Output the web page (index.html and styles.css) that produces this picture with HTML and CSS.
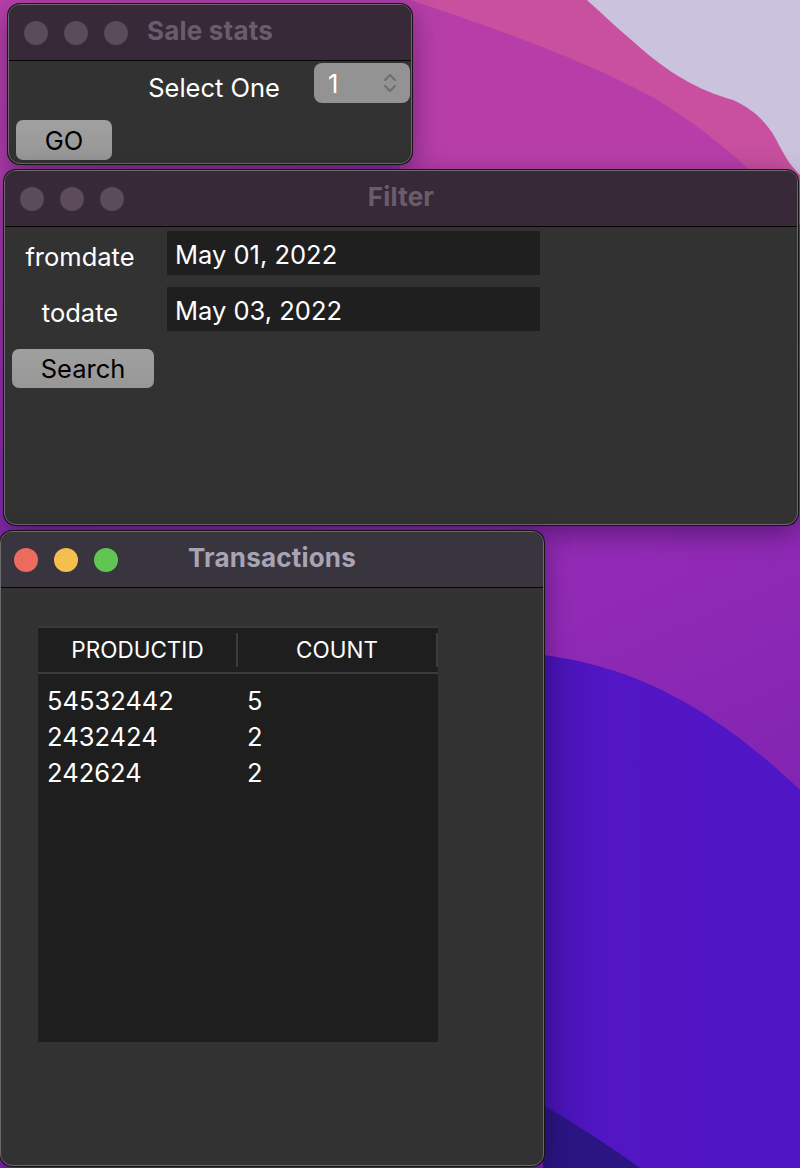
FILE: index.html
```html
<!DOCTYPE html>
<html lang="en">
<head>
<meta charset="utf-8">
<title>Sale stats</title>
<link rel="stylesheet" href="styles.css">
</head>
<body>
<div class="desktop">
  <svg class="wallpaper" viewBox="0 0 800 1168" preserveAspectRatio="none" aria-hidden="true">
    <defs>
      <linearGradient id="base" x1="0" y1="0" x2="0.3" y2="1">
        <stop offset="0" stop-color="#b841aa"/>
        <stop offset="0.15" stop-color="#b03eae"/>
        <stop offset="0.4" stop-color="#8c2bb2"/>
        <stop offset="0.55" stop-color="#9a2db8"/>
        <stop offset="1" stop-color="#7a22b0"/>
      </linearGradient>
      <linearGradient id="violet" x1="0" y1="0" x2="1" y2="0">
        <stop offset="0" stop-color="#4613b4"/>
        <stop offset="0.25" stop-color="#5216c4"/>
        <stop offset="1" stop-color="#5015c6"/>
      </linearGradient>
    </defs>
    <rect x="0" y="0" width="800" height="1168" fill="url(#base)"/>
    <rect x="400" y="0" width="400" height="180" fill="#b73ea9"/>
    <path d="M410 0 C470 20 560 50 633 87 C680 110 730 150 760 180 L800 225 L800 0 Z" fill="#c8509f"/>
    <path d="M587 0 C600 12 625 35 650 56 C680 80 705 92 733 100 C755 110 770 125 780 147 C786 158 790 165 800 175 L800 0 Z" fill="#cbc3de"/>
    <path d="M543 655 C620 665 700 695 800 790 L800 1168 L543 1168 Z" fill="url(#violet)"/>
    <path d="M543 1105 Q590 1132 640 1168 L543 1168 Z" fill="#2a1582"/>
  </svg>

  <section class="window win-sale">
    <header class="titlebar titlebar-inactive">
      <div class="lights">
        <span class="light"></span><span class="light"></span><span class="light"></span>
      </div>
      <h1 class="title">Sale stats</h1>
      <div></div>
    </header>
    <div class="sale-body">
      <div class="select-row">
        <span class="label select-label">Select One</span>
        <div class="popup">
          <span class="popup-value">1</span>
          <svg class="chevrons" width="14" height="22" viewBox="0 0 14 22" aria-hidden="true">
            <path d="M2 8 L7 3 L12 8" fill="none" stroke="#6e6e6e" stroke-width="2" stroke-linecap="round" stroke-linejoin="round"/>
            <path d="M2 14 L7 19 L12 14" fill="none" stroke="#6e6e6e" stroke-width="2" stroke-linecap="round" stroke-linejoin="round"/>
          </svg>
        </div>
      </div>
      <button class="btn btn-go">GO</button>
    </div>
  </section>

  <section class="window win-filter">
    <header class="titlebar titlebar-inactive">
      <div class="lights">
        <span class="light"></span><span class="light"></span><span class="light"></span>
      </div>
      <h1 class="title">Filter</h1>
      <div></div>
    </header>
    <div class="filter-body">
      <span class="label field-label">fromdate</span>
      <div class="field">May 01, 2022</div>
      <span class="label field-label">todate</span>
      <div class="field">May 03, 2022</div>
      <button class="btn btn-search">Search</button>
    </div>
  </section>

  <section class="window win-trans">
    <header class="titlebar titlebar-active">
      <div class="lights">
        <span class="light light-close"></span><span class="light light-min"></span><span class="light light-max"></span>
      </div>
      <h1 class="title">Transactions</h1>
      <div></div>
    </header>
    <div class="trans-body">
      <div class="table">
        <div class="thead">
          <div class="th">PRODUCTID</div>
          <div class="th">COUNT</div>
        </div>
        <div class="tbody">
          <div class="tr"><span class="td">54532442</span><span class="td td-count">5</span></div>
          <div class="tr"><span class="td">2432424</span><span class="td td-count">2</span></div>
          <div class="tr"><span class="td">242624</span><span class="td td-count">2</span></div>
        </div>
      </div>
    </div>
  </section>
</div>
</body>
</html>
```

FILE: styles.css
```css
* { box-sizing: border-box; }

html, body {
  margin: 0;
  padding: 0;
  width: 800px;
  height: 1168px;
  overflow: hidden;
  background: #8a2ab2;
  font-family: Inter, "Noto Sans", "Liberation Sans", sans-serif;
}

.desktop {
  position: relative;
  width: 800px;
  height: 1168px;
  overflow: hidden;
}

.wallpaper {
  position: absolute;
  left: 0;
  top: 0;
  width: 800px;
  height: 1168px;
}

.window {
  position: absolute;
  display: flex;
  flex-direction: column;
  background: #323232;
  border: 1px solid #6a6a6a;
  border-radius: 12px;
  box-shadow: 0 0 0 1px #141414, 0 8px 28px rgba(20, 0, 40, 0.45);
  overflow: hidden;
}

.win-sale { left: 8px; top: 4px; width: 404px; height: 160px; }
.win-filter { left: 4px; top: 170px; width: 794px; height: 355px; }
.win-trans { left: 0; top: 531px; width: 544px; height: 635px; }

.titlebar {
  flex: none;
  height: 56px;
  display: grid;
  grid-template-columns: 1fr auto 1fr;
  align-items: center;
  border-bottom: 1px solid #050505;
}

.titlebar-inactive { background: #372937; }
.titlebar-active { background: #38353f; }

.lights {
  display: flex;
  gap: 16px;
  padding-left: 15px;
}

.win-trans .lights { padding-left: 13px; }

.light {
  width: 24px;
  height: 24px;
  border-radius: 50%;
  background: #5b4b5b;
}

.light-close { background: #ec6a5e; }
.light-min { background: #f4bf4f; }
.light-max { background: #61c554; }

.title {
  margin: 0 0 4px;
  font-size: 26px;
  font-weight: 700;
  letter-spacing: 0.2px;
  color: #6b5c6b;
  white-space: nowrap;
}

.titlebar-active .title { color: #a9a4b4; }

.label {
  color: #ffffff;
  font-size: 25.5px;
}

/* Sale stats */
.sale-body {
  flex: 1;
  display: flex;
  flex-direction: column;
  align-items: flex-start;
  gap: 17px;
  padding: 2px 1px 0 7px;
}

.select-row {
  align-self: stretch;
  display: flex;
  justify-content: flex-end;
  align-items: center;
  gap: 34px;
}

.select-label { padding-top: 8px; }

.popup {
  width: 96px;
  height: 40px;
  border-radius: 8px;
  background: #939393;
  display: flex;
  align-items: center;
  justify-content: space-between;
  padding: 0 13px 0 14px;
}

.popup-value {
  color: #ffffff;
  font-size: 25.5px;
}

.chevrons { display: block; }

.btn {
  border: none;
  border-radius: 7px;
  background: linear-gradient(#a0a0a0, #979797);
  color: #000;
  font-family: inherit;
  font-size: 25.5px;
  padding: 0;
  height: 40px;
}

.btn-go { width: 96px; }

/* Filter */
.filter-body {
  flex: 1;
  display: grid;
  grid-template-columns: 142px 373px;
  grid-auto-rows: 44px;
  column-gap: 13px;
  row-gap: 12px;
  align-content: start;
  padding: 4px 0 0 7px;
}

.field-label {
  display: flex;
  align-items: center;
  justify-content: center;
  padding: 7px 6px 0 0;
}

.field {
  background: #1f1f1f;
  color: #ffffff;
  font-size: 25.5px;
  display: flex;
  align-items: center;
  padding-left: 8px;
  padding-top: 2px;
}

.btn-search {
  grid-column: 1;
  width: 142px;
  height: 39px;
  margin-top: 6px;
}

/* Transactions */
.trans-body {
  flex: 1;
  padding: 38px 0 0 37px;
}

.table {
  width: 400px;
  height: 416px;
  background: #1e1e1e;
  border-top: 2px solid #3a3a3a;
  display: flex;
  flex-direction: column;
}

.thead {
  flex: none;
  height: 46px;
  display: grid;
  grid-template-columns: 199px 200px;
  border-bottom: 2px solid #3b3b3b;
  align-items: center;
}

.th {
  position: relative;
  height: 100%;
  display: flex;
  align-items: center;
  justify-content: center;
  color: #ffffff;
  font-size: 22.5px;
  padding-bottom: 1px;
}

.th::after {
  content: "";
  position: absolute;
  right: -1px;
  top: 5px;
  bottom: 5px;
  width: 2px;
  background: #3c3c3c;
}

.tbody {
  padding-top: 8px;
}

.tr {
  display: grid;
  grid-template-columns: 199px 200px;
  height: 36px;
  align-items: center;
}

.td {
  color: #ffffff;
  font-size: 25.5px;
  padding-left: 9px;
}

.td-count { padding-left: 10px; }
```
